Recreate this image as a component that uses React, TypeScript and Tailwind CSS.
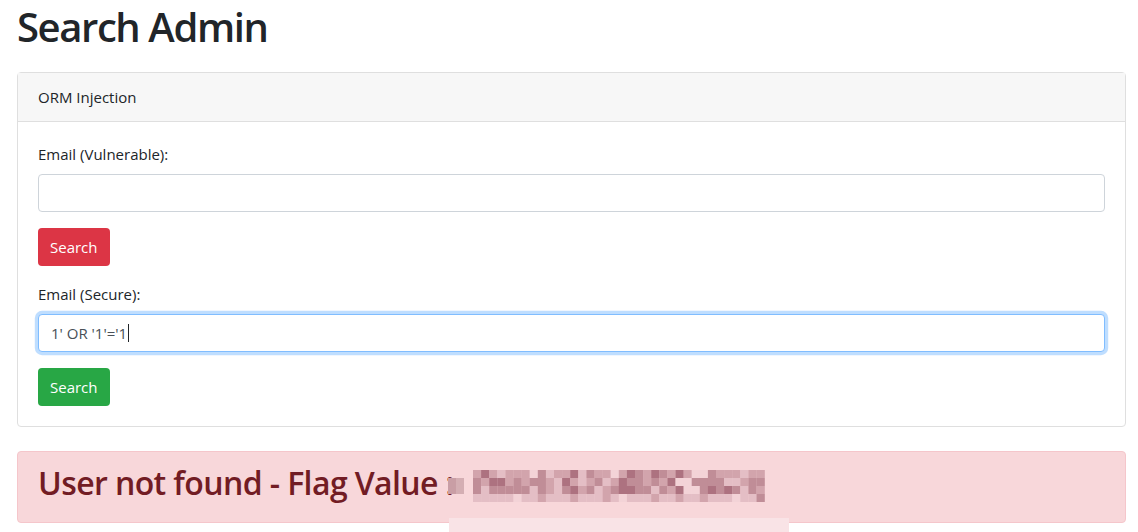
import React from 'react';

// pixelated censor block over the flag value
const SHADES: Record<string, string> = {
  D: '#ad7280',
  M: '#c08d97',
  m: '#d2a4ac',
  L: '#e4bec5',
  P: '#f3d3d7',
};

const ROWS = [
  'mDmLmmmPMLmmDLMmmPmDMmDMmDmPPMmmmLmm',
  'MmDDmMmMMmLDmLmMLmDMMmMmDPPMMMMLLmMM',
  'MLMMMMMLMmLMDmMLmMDDMMLMmDPPMDMDMLMm',
  'LLLLLPLLmLLLmLLLmLPLLLmLLmLLmLLLPLLM',
];

function Censor() {
  const cell = 8.1;
  return (
    <svg width="330" height="34" viewBox="0 0 330 34" className="block">
      <rect x="0" y="8" width="8" height="8" fill="#c99ea5" />
      <rect x="8" y="8" width="8" height="8" fill="#d4aeb3" />
      <rect x="0" y="16" width="8" height="8" fill="#c99ea5" />
      <rect x="8" y="16" width="8" height="8" fill="#d4aeb3" />
      {ROWS.map((row, r) =>
        row.split('').map((c, i) => (
          <rect
            key={`${r}-${i}`}
            x={25 + i * cell}
            y={r * 8}
            width={cell + 0.2}
            height="8"
            fill={SHADES[c]}
          />
        ))
      )}
    </svg>
  );
}

function Field({ label, value, focused }: { label: string; value?: string; focused?: boolean }) {
  return (
    <div className="mb-4">
      <div className="mb-2 leading-6">{label}</div>
      <div
        className={
          'h-[38px] w-full rounded-[4px] border px-3 flex items-center text-[#495057] bg-white ' +
          (focused
            ? 'border-[#80bdff] shadow-[0_0_0_3.2px_rgba(0,123,255,0.25)]'
            : 'border-[#ced4da]')
        }
      >
        {value}
        {focused && <span className="ml-px inline-block h-[18px] w-px bg-[#212529]" />}
      </div>
    </div>
  );
}

function Button({ color }: { color: 'red' | 'green' }) {
  return (
    <button
      className={
        'h-[38px] px-3 rounded-[4px] text-white leading-6 ' +
        (color === 'red' ? 'bg-[#dc3545]' : 'bg-[#28a745]')
      }
    >
      Search
    </button>
  );
}

export default function App() {
  return (
    <div
      className="min-h-[532px] bg-white text-[#212529] text-base overflow-hidden pl-[17px]"
      style={{ fontFamily: '"Open Sans", "Noto Sans", Arial, sans-serif' }}
    >
      <h1 className="text-[40px] leading-[54px] font-semibold mb-[18px] tracking-[-1.4px]">Search Admin</h1>

      <div className="w-[1109px] rounded-[4px] border border-[#dfdfdf] mb-6">
        <div className="bg-[#f7f7f7] border-b border-[#dfdfdf] px-5 py-3 leading-6 text-[15px]">ORM Injection</div>
        <div className="p-5 text-[15px]">
          <Field label="Email (Vulnerable):" />
          <div className="mb-4">
            <Button color="red" />
          </div>
          <Field label="Email (Secure):" value="1' OR '1'='1" focused />
          <Button color="green" />
        </div>
      </div>

      <div className="relative w-[1109px] rounded-[4px] border border-[#f5c6cb] bg-[#f8d7da] text-[#721c24] px-5 py-3">
        <h2 className="text-[32px] leading-[38px] font-semibold mb-2 tracking-[-0.6px]">
          User not found - Flag Value :
        </h2>
        <div className="absolute left-[430px] top-[18px]">
          <Censor />
        </div>
      </div>
      <div className="relative">
        <div className="absolute left-[432px] -top-[5px] w-[340px] h-[20px] bg-[#f9e3e6]" />
      </div>
    </div>
  );
}
